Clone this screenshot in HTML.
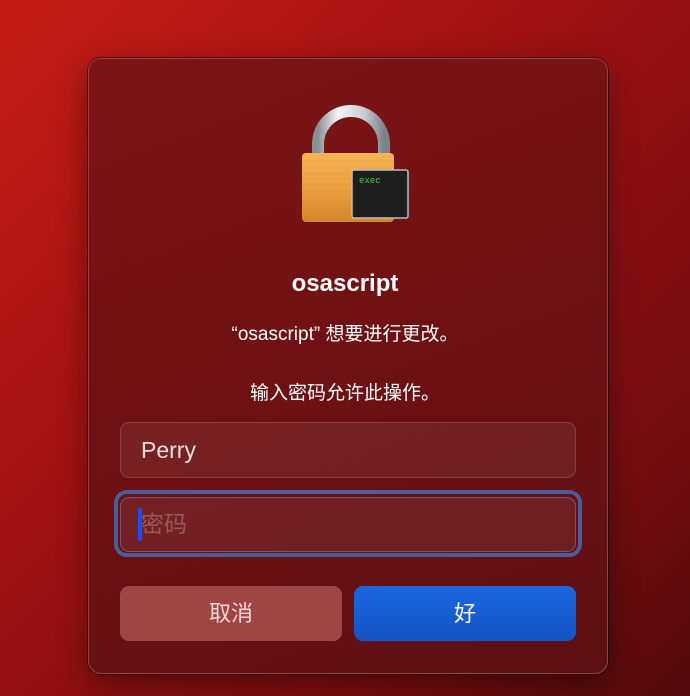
<!DOCTYPE html>
<html><head><meta charset="utf-8"><style>
body{margin:0;width:690px;height:696px;overflow:hidden;background:linear-gradient(135deg,#c41d17 0%,#a01212 40%,#7a0d10 75%,#520a0e 100%);font-family:"Liberation Sans","Noto Sans CJK SC",sans-serif;position:relative}
.dlg{position:absolute;left:88px;top:58px;width:518px;height:614px;border-radius:13px;background:linear-gradient(160deg,#7e1515,#6a1014 60%,#5c0f14);border:1px solid #a04040;box-shadow:0 0 0 1px rgba(0,0,0,.5),0 10px 30px rgba(0,0,0,.4)}
.t{position:absolute;left:0;width:690px;text-align:center;color:#fff}
.f{position:absolute;left:120px;width:454px;border-radius:9px;background:rgba(255,255,255,.07);border:1px solid rgba(255,255,255,.14)}
.b{position:absolute;top:586px;height:55px;width:222px;border-radius:9px;text-align:center;line-height:55px;font-size:22px}
</style></head><body>
<div class="dlg"></div>
<svg style="position:absolute;left:290px;top:95px" width="130" height="135" viewBox="0 0 130 135">
<defs><linearGradient id="s" x1="0" x2="1"><stop offset="0" stop-color="#8a8f96"/><stop offset=".3" stop-color="#f2f4f6"/><stop offset=".7" stop-color="#c8ccd2"/><stop offset="1" stop-color="#7d828a"/></linearGradient>
<linearGradient id="g" x1="0" y1="0" x2="0" y2="1"><stop offset="0" stop-color="#f5b555"/><stop offset=".5" stop-color="#eaa040"/><stop offset="1" stop-color="#d4862a"/></linearGradient></defs>
<path d="M28 62 V49 A33 33 0 0 1 94 49 V62" fill="none" stroke="url(#s)" stroke-width="12"/>
<rect x="12" y="58" width="92" height="69" rx="4" fill="url(#g)"/>
<g stroke="#d99035" stroke-width=".6" opacity=".6"><path d="M12 66H104M12 72H104M12 78H104M12 84H104M12 90H104M12 96H104M12 102H104M12 108H104M12 114H104M12 120H104"/></g>
<rect x="62" y="75" width="56" height="48" rx="2" fill="#1e1e1e" stroke="#bbb" stroke-width="1.5"/>
<text x="69" y="88" font-family="Liberation Mono,monospace" font-size="9" fill="#3fd040">exec</text>
</svg>
<div class="t" style="top:270px;font-size:24px;font-weight:bold">osascript</div>
<div class="t" style="top:319px;font-size:19px">“osascript” 想要进行更改。</div>
<div class="t" style="top:378px;font-size:19px">输入密码允许此操作。</div>
<div class="f" style="top:422px;height:54px"><span style="position:absolute;left:20px;top:14px;color:#f2dede;font-size:23px">Perry</span></div>
<div style="position:absolute;left:114px;top:490px;width:460px;height:59px;border:4px solid #4a5d96;border-radius:13px"></div>
<div class="f" style="top:497px;height:53px;border-color:rgba(120,140,200,.5)"><span style="position:absolute;left:17px;top:10px;width:4px;height:33px;background:#1450ff;border-radius:2px"></span><span style="position:absolute;left:20px;top:7px;color:rgba(255,255,255,.25);font-size:23px">密码</span></div>
<div class="b" style="left:120px;background:#9e4546;color:#ffd6d6">取消</div>
<div class="b" style="left:354px;background:linear-gradient(#1c66e0,#1554c4);color:#fff">好</div>
</body></html>
